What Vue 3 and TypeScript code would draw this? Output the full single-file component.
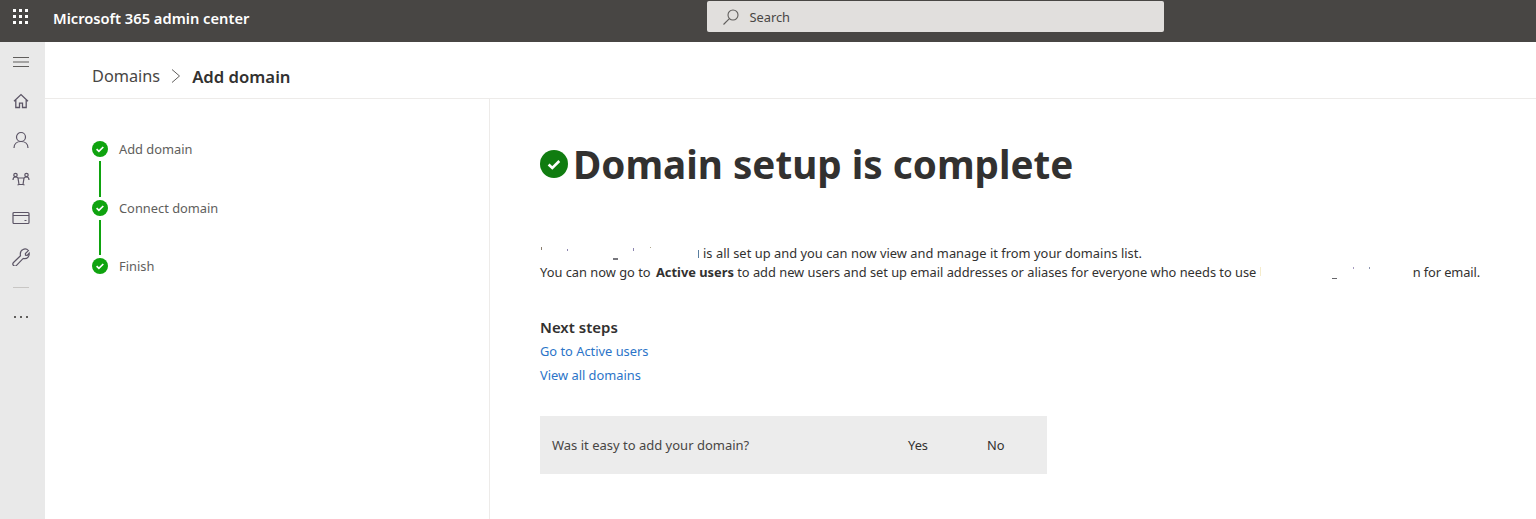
<script setup lang="ts">
interface Mark { x: number; y: number; w: number; h: number; c: string }

const steps: string[] = ['Add domain', 'Connect domain', 'Finish']

// Fragments of the blanked-out domain name that stay visible in the paragraph.
const marks: Mark[] = [
  { x: 1, y: 3, w: 1, h: 3, c: '#8a7f70' },
  { x: 27, y: 5, w: 1, h: 2, c: '#8d86b0' },
  { x: 93, y: 4, w: 1, h: 3, c: '#8d86b0' },
  { x: 110, y: 3, w: 1, h: 1, c: '#b0a890' },
  { x: 73, y: 14, w: 5, h: 2, c: '#77777d' },
  { x: 158, y: 6, w: 1, h: 8, c: '#5a7fa0' },
  { x: 720, y: 23, w: 1, h: 9, c: '#f5eccb' },
  { x: 813, y: 23, w: 1, h: 2, c: '#a79cc0' },
  { x: 829, y: 23, w: 1, h: 2, c: '#8d96b0' },
  { x: 792, y: 34, w: 5, h: 1, c: '#66666b' }
]

function markStyle(m: Mark): Record<string, string> {
  return {
    left: `${m.x}px`,
    top: `${m.y}px`,
    width: `${m.w}px`,
    height: `${m.h}px`,
    background: m.c
  }
}
</script>

<template>
  <div class="page">
    <header class="topbar">
      <svg class="waffle" width="18" height="16" viewBox="0 0 18 16" fill="#fff">
        <g v-for="y in [1, 7, 13]" :key="y">
          <rect v-for="x in [1, 7, 13]" :key="x" :x="x" :y="y" width="3" height="3" />
        </g>
      </svg>
      <span class="brand">Microsoft 365 admin center</span>
      <div class="search">
        <svg width="18" height="18" viewBox="0 0 18 18" fill="none" stroke="#605e5c" stroke-width="1.1">
          <circle cx="11" cy="7" r="5" />
          <path d="M7.4 10.6 1.5 16.5" />
        </svg>
        <span>Search</span>
      </div>
    </header>
    <div class="body">
      <nav class="rail">
        <div class="slot">
          <svg width="18" height="12" viewBox="0 0 18 12" stroke="#605e5c" stroke-width="1.2">
            <path d="M1 1.5h16M1 6h16M1 10.5h16" />
          </svg>
        </div>
        <div class="slot">
          <svg width="18" height="18" viewBox="0 0 18 18" fill="none" stroke="#5c5566" stroke-width="1.3">
            <path d="M2 9.2 9 2.6l7 6.6M3.8 7.6v7.9h3.7v-4.4h3v4.400h3.700V7.600" />
          </svg>
        </div>
        <div class="slot">
          <svg width="18" height="18" viewBox="0 0 18 18" fill="none" stroke="#5c5566" stroke-width="1.2">
            <circle cx="9" cy="6" r="4.500" />
            <path d="M2 17c0-4 3-6.500 7-6.500s7 2.500 7 6.500" />
          </svg>
        </div>
        <div class="slot">
          <svg width="18" height="14" viewBox="0 0 18 14" fill="none" stroke="#5c5566" stroke-width="1.200">
            <circle cx="3.500" cy="3" r="1.700" />
            <circle cx="14.500" cy="3" r="1.700" />
            <path d="M1 8c0-2 1-3 2.500-3s2 .5 2.500 1M17 8c0-2-1-3-2.500-3s-2 .5-2.500 1M6 6h6l-1 6.500H7ZM5.500 13l1.500-.5M12.500 13l-1.500-.5" />
          </svg>
        </div>
        <div class="slot">
          <svg width="18" height="14" viewBox="0 0 18 14" fill="none" stroke="#5c5566" stroke-width="1.200">
            <rect x="1" y="1.500" width="16" height="11" rx="1" />
            <path d="M1 4.500h16M12.500 9.500h2" />
          </svg>
        </div>
        <div class="slot">
          <svg width="18" height="18" viewBox="0 0 18 18" fill="none" stroke="#5c5566" stroke-width="1.200">
            <path d="M11 1.500a4.600 4.600 0 0 1 5.400 1.100l-3 3 .1 1.700 1.700.1 2-2.200c.3 3-1.700 5.500-4.500 5.500-.6 0-1 0-1.500-.3l-6.700 7a2 2 0 0 1-3-2.900l7-6.700C8 5.200 8.700 2.500 11 1.500Z" />
          </svg>
        </div>
        <div class="rail-sep"></div>
        <div class="more"><i></i><i></i><i></i></div>
      </nav>
      <div class="content">
        <div class="crumbs">
          <span class="crumb">Domains</span>
          <svg width="12" height="16" viewBox="0 0 12 16" fill="none" stroke="#605e5c" stroke-width="1">
            <path d="m2 1.500 7.500 6.500L2 14.500" />
          </svg>
          <span class="crumb-now">Add domain</span>
        </div>
        <div class="columns">
          <aside class="stepper">
            <template v-for="(s, i) in steps" :key="s">
              <div class="step">
                <svg width="16" height="16" viewBox="0 0 16 16">
                  <circle cx="8" cy="8" r="8" fill="#0fa30f" />
                  <path d="m4.600 8.200 2.300 2.200 4.400-4.400" fill="none" stroke="#fff" stroke-width="1.700" />
                </svg>
                <span>{{ s }}</span>
              </div>
              <div v-if="i < steps.length - 1" class="conn"></div>
            </template>
          </aside>
          <main class="main">
            <h1 class="title">
              <svg width="28" height="28" viewBox="0 0 28 28">
                <circle cx="14" cy="14" r="14" fill="#107c10" />
                <path d="m8.600 14.500 3.700 3.500 7-7" fill="none" stroke="#fff" stroke-width="2.600" />
              </svg>
              <span>Domain setup is complete</span>
            </h1>
            <p class="para">
              <i v-for="(m, k) in marks" :key="k" class="mark" :style="markStyle(m)"></i>
              <span class="hide h1"></span><span class="wide">is all set up and you can now view and manage it from your domains list.</span><br />
              You can now go to <b>Active users</b><span class="tight"> to add new users and set up email addresses or aliases for everyone who needs to use <span class="hide h2"></span><span class="tail">n for email.</span></span>
            </p>
            <h2 class="next">Next steps</h2>
            <a class="link first">Go to Active users</a>
            <a class="link">View all domains</a>
            <div class="feedback">
              <span class="q">Was it easy to add your domain?</span>
              <span class="yes">Yes</span>
              <span class="no">No</span>
            </div>
          </main>
        </div>
      </div>
    </div>
  </div>
</template>

<style>
html, body { margin: 0; background: #fff; overflow: hidden; }
</style>

<style scoped>
.page {
  width: 1536px;
  height: 519px;
  display: flex;
  flex-direction: column;
  font-family: "Noto Sans", "Open Sans", sans-serif;
  font-size: 12.85px;
  color: #323130;
  overflow: hidden;
}
.topbar {
  height: 42px;
  flex: none;
  background: #484644;
  display: flex;
  align-items: center;
  color: #fff;
}
.waffle { margin-left: 12px; margin-top: -10px; }
.brand { margin-left: 23px; font-size: 14.7px; font-weight: 600; margin-top: -7px; white-space: nowrap; }
.search {
  margin-left: 458px;
  margin-top: -9px;
  width: 457px;
  height: 31px;
  background: #e1dfdd;
  border-radius: 2px;
  display: flex;
  align-items: center;
  gap: 9px;
  padding-left: 15px;
  box-sizing: border-box;
  color: #484644;
}
.body { flex: 1; display: flex; min-height: 0; }
.rail {
  width: 45px;
  flex: none;
  background: #e9e9e9;
  display: flex;
  flex-direction: column;
  align-items: center;
  box-sizing: border-box;
}
.slot { height: 39px; width: 100%; display: flex; align-items: center; justify-content: center; padding-right: 3px; box-sizing: border-box; }
.rail-sep { width: 16px; height: 1px; background: #c8c6c4; margin: 11px 0 0 -3px; }
.more { display: flex; gap: 4px; margin: 28px 0 0 -3px; }
.more i { width: 2px; height: 2px; background: #605e5c; }
.content { flex: 1; display: flex; flex-direction: column; min-width: 0; }
.crumbs {
  height: 57px;
  flex: none;
  box-sizing: border-box;
  border-bottom: 1px solid #edebe9;
  display: flex;
  align-items: center;
  padding: 12px 0 0 47px;
  gap: 10px;
}
.crumb { font-size: 16.3px; color: #484644; }
.crumb-now { font-size: 16.7px; font-weight: 600; }
.columns { flex: 1; display: flex; min-height: 0; }
.stepper {
  width: 445px;
  flex: none;
  box-sizing: border-box;
  border-right: 1px solid #edebe9;
  padding: 42px 0 0 47px;
  color: #605e5c;
}
.step { display: flex; align-items: center; gap: 11px; height: 16px; }
.conn { width: 2px; height: 35.5px; background: #0fa30f; margin: 4px 0 3px 7px; }
.main { flex: 1; padding: 0 0 0 50px; min-width: 0; }
.title {
  margin: 39px 0 0;
  display: flex;
  align-items: center;
  gap: 5px;
  font-size: 38.65px;
  line-height: 52px;
  font-weight: 700;
  white-space: nowrap;
}
.para { margin: 54px 0 0; line-height: 19px; white-space: nowrap; position: relative; }
.mark { position: absolute; display: block; }
.hide { display: inline-block; height: 1px; }
.h1 { width: 163px; }
.h2 { width: 153px; }
.wide { letter-spacing: 0.03px; }
.para b { margin-left: 2px; }
.tight { letter-spacing: -0.015px; }
.tail { letter-spacing: -0.1px; }
.next { margin: 35px 0 0; font-size: 15px; font-weight: 600; line-height: 20px; }
.link { display: block; color: #2b74c8; line-height: 18px; margin-top: 6px; }
.link.first { margin-top: 5px; }
.feedback {
  width: 507px;
  height: 58px;
  margin-top: 32px;
  background: #ececec;
  display: flex;
  align-items: center;
  padding-left: 12px;
  box-sizing: border-box;
}
.q { width: 356px; color: #484644; font-size: 13px; }
.yes { width: 79px; }
</style>
